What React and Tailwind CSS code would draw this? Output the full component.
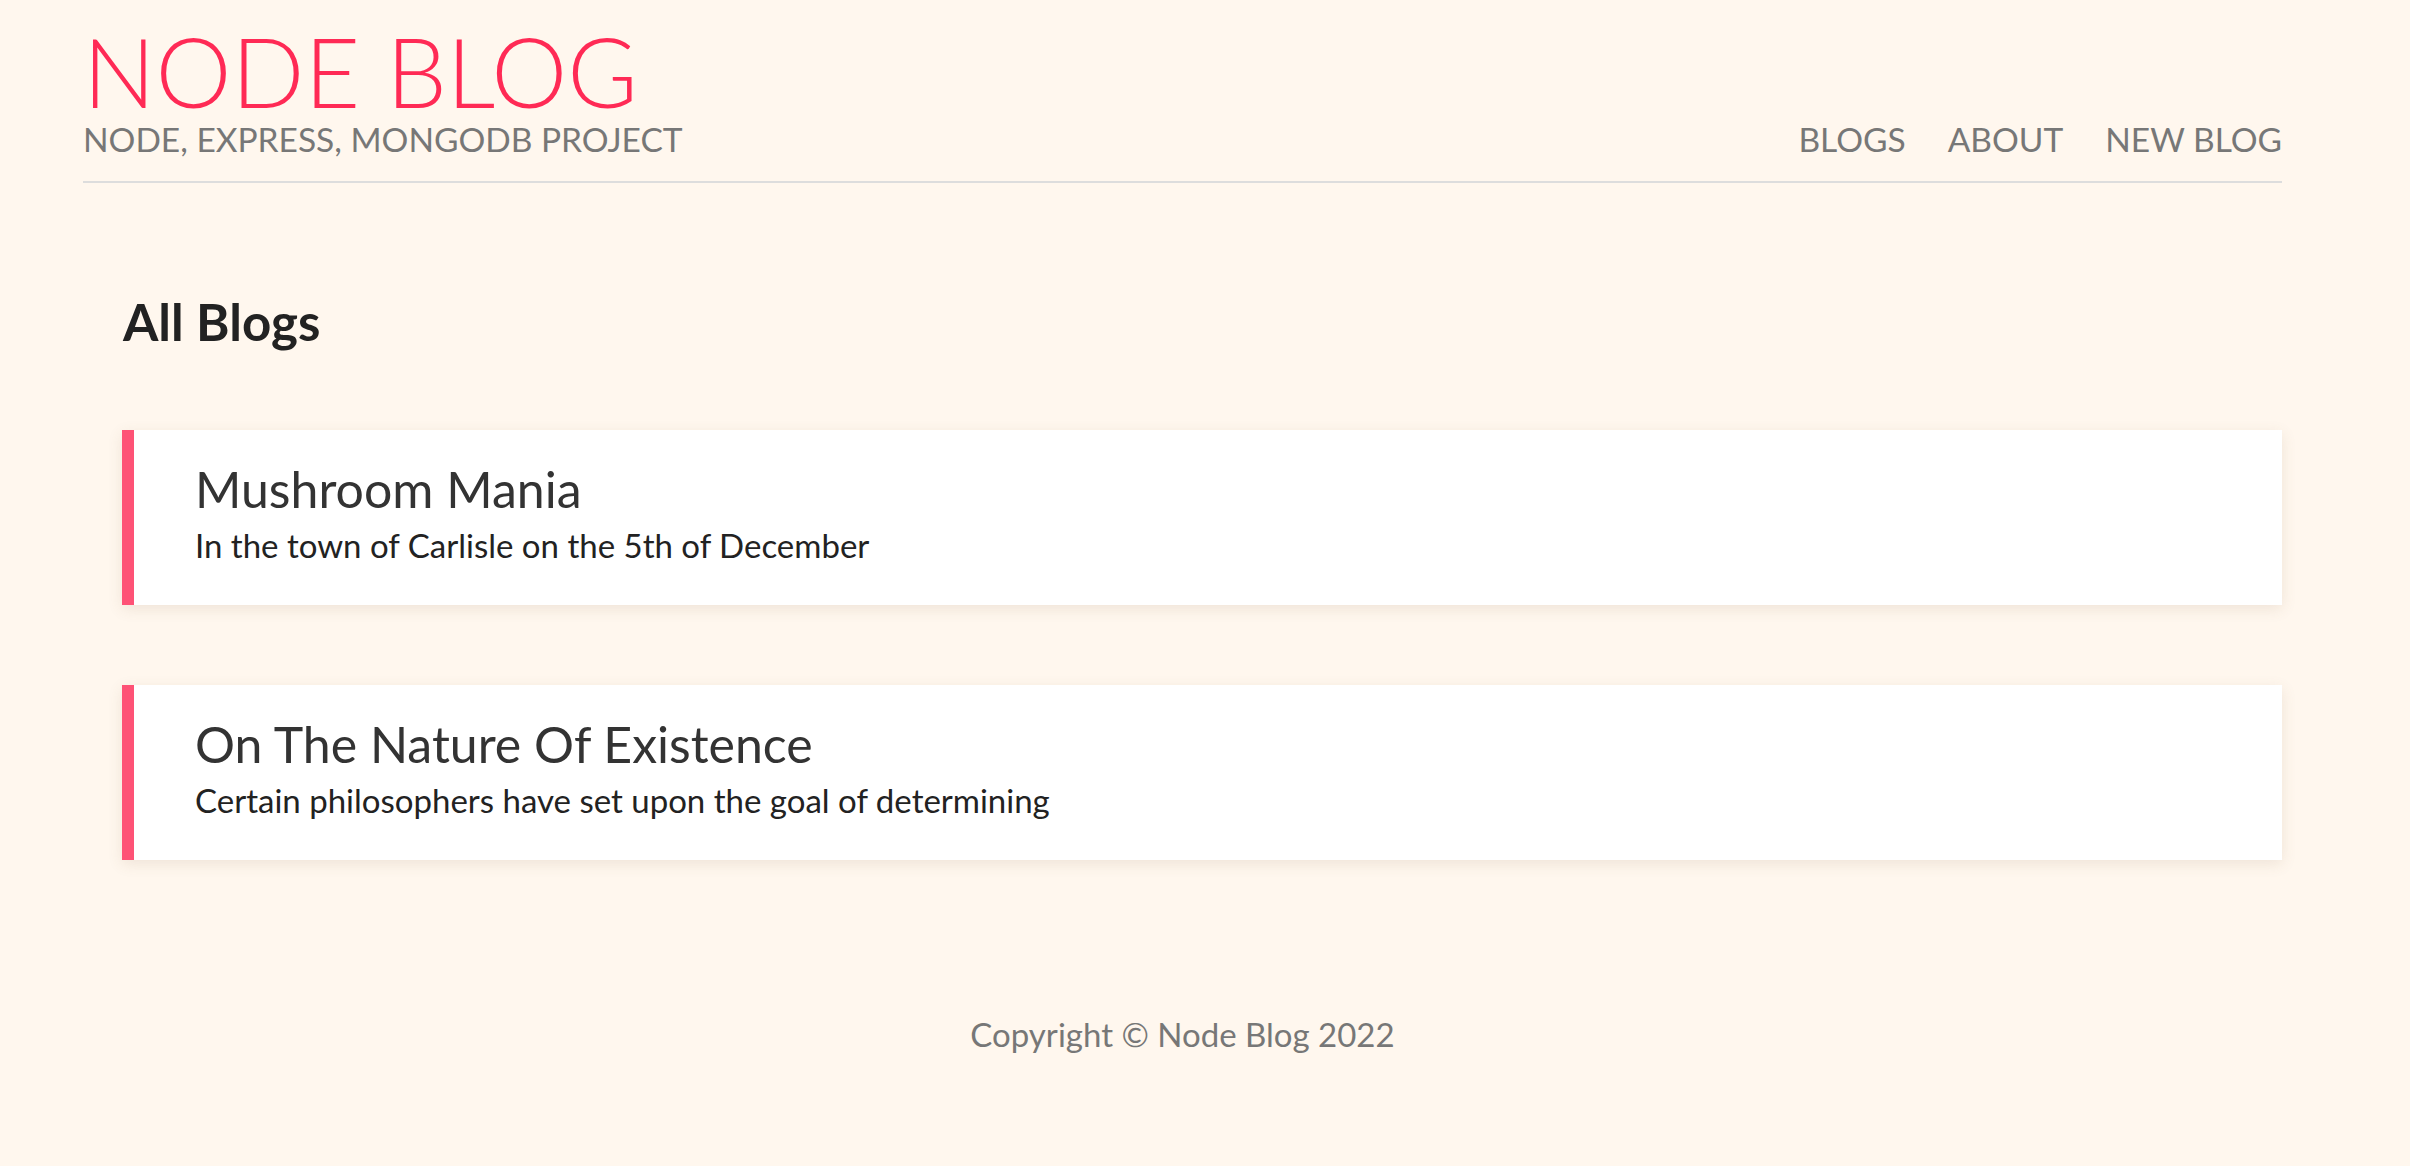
import React from 'react';

const blogs = [
  { id: 1, title: 'Mushroom Mania', snippet: 'In the town of Carlisle on the 5th of December' },
  { id: 2, title: 'On The Nature Of Existence', snippet: 'Certain philosophers have set upon the goal of determining' },
];

export default function App() {
  return (
    <div className="min-h-screen bg-[#fff7ee] font-['Lato','Liberation_Sans',sans-serif] pt-[23px]">
      <div className="ml-[83px] w-[2199px]">
        {/* nav */}
        <nav className="flex justify-between items-end border-b-2 border-[#dddddd] pb-[24px] uppercase">
          <div>
            <h1 className="text-[96px] leading-none font-light text-[#ff2a55]">Node Blog</h1>
            <p className="mt-[4px] text-[33.5px] leading-none text-[#777777]">Node, Express, MongoDB Project</p>
          </div>
          <ul className="flex gap-[42px] text-[33.5px] leading-none text-[#777777]">
            <li><a href="#">Blogs</a></li>
            <li><a href="#">About</a></li>
            <li><a href="#">New Blog</a></li>
          </ul>
        </nav>

        {/* blog list */}
        <div className="pl-[39px]">
          <h2 className="mt-[113px] ml-[1px] text-[51px] leading-none font-bold text-[#222222]">All Blogs</h2>
          <div className="mt-[83px] flex flex-col gap-[80px]">
            {blogs.map((b) => (
              <a
                key={b.id}
                href="#"
                className="block bg-white border-l-[12px] border-[#fe5276] pl-[61px] pt-[34px] pb-[43px] shadow-[0_4px_14px_rgba(120,90,60,0.12)]"
              >
                <h3 className="text-[50px] leading-none text-[#333333]">{b.title}</h3>
                <p className="mt-[15px] text-[33px] leading-none text-[#222222]">{b.snippet}</p>
              </a>
            ))}
          </div>
        </div>

        <footer className="mt-[158px] text-center text-[33px] leading-none text-[#777777]">
          Copyright © Node Blog 2022
        </footer>
      </div>
    </div>
  );
}
